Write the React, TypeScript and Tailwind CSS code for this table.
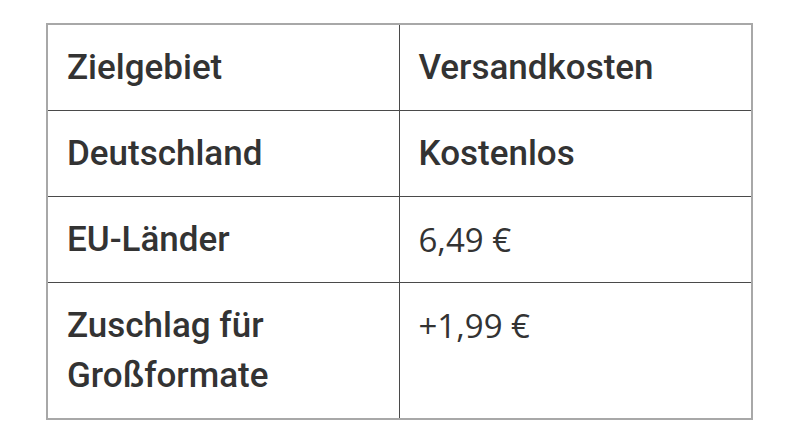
import React from 'react'

const rows = [
  { zone: 'Zielgebiet', cost: 'Versandkosten', bold: true },
  { zone: 'Deutschland', cost: 'Kostenlos', bold: true },
  { zone: 'EU-Länder', cost: '6,49 €', bold: false },
  { zone: 'Zuschlag für Großformate', cost: '+1,99 €', bold: false },
]

function App() {
  return (
    <div className="w-[799px] h-[440px] bg-white pt-[23px] pl-[46px]">
      <table className="w-[707px] border-collapse border-2 border-[#a8a8a8] text-[#333333] text-[35px] leading-[50px]">
        <tbody>
          {rows.map((r, i) => (
            <tr key={i} className={i > 0 ? 'border-t border-[#4a4a4a]' : ''}>
              <td className="w-[352px] align-top px-[19px] pt-[18px] pb-[17px] font-medium font-['Roboto',sans-serif] border-r border-[#4a4a4a]">
                {r.zone}
              </td>
              <td
                className={
                  r.bold
                    ? "align-top px-[19px] pt-[18px] pb-[17px] font-medium font-['Roboto',sans-serif]"
                    : "align-top px-[19px] pt-[18px] pb-[17px] font-normal text-[33px] font-['Open_Sans',sans-serif]"
                }
              >
                {r.cost}
              </td>
            </tr>
          ))}
        </tbody>
      </table>
    </div>
  )
}

export default App
